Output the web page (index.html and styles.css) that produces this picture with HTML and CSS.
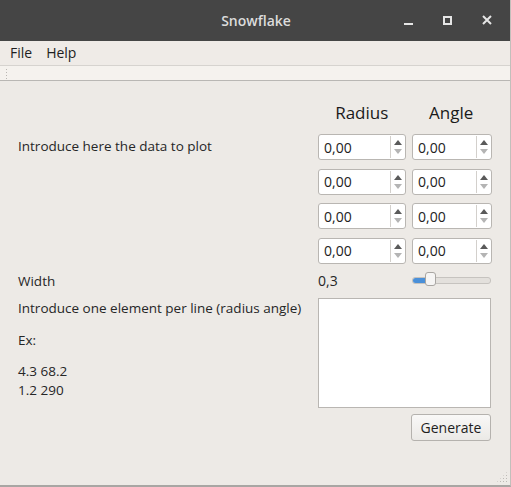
FILE: index.html
```html
<!DOCTYPE html>
<html lang="en">
<head>
    <meta charset="UTF-8">
    <title>Snowflake</title>
    <link rel="stylesheet" href="styles.css">
</head>
<body>
    <div class="window">
        <div class="titlebar">
            <span class="title">Snowflake</span>
            <div class="controls">
                <span class="ctl ctl-min"></span>
                <span class="ctl ctl-max"></span>
                <svg class="ctl-close" width="10" height="10" viewBox="0 0 10 10">
                    <path d="M1 1 L9 9 M9 1 L1 9" stroke="#e6e6e6" stroke-width="2"/>
                </svg>
            </div>
        </div>

        <div class="menubar">
            <span class="menu">File</span>
            <span class="menu">Help</span>
        </div>
        <div class="toolbar"><span class="grip"></span></div>

        <div class="content">
            <div class="row header-row">
                <div class="label"></div>
                <div class="col-head radius-head">Radius</div>
                <div class="col-head angle-head">Angle</div>
            </div>

            <div class="data">
                <div class="label data-label">Introduce here the data to plot</div>
                <div class="spins">
                    <div class="spin wide"><span>0,00</span><div class="arrows"><i class="up"></i><i class="down"></i></div></div>
                    <div class="spin"><span>0,00</span><div class="arrows"><i class="up"></i><i class="down"></i></div></div>
                    <div class="spin wide"><span>0,00</span><div class="arrows"><i class="up"></i><i class="down"></i></div></div>
                    <div class="spin"><span>0,00</span><div class="arrows"><i class="up"></i><i class="down"></i></div></div>
                    <div class="spin wide"><span>0,00</span><div class="arrows"><i class="up"></i><i class="down"></i></div></div>
                    <div class="spin"><span>0,00</span><div class="arrows"><i class="up"></i><i class="down"></i></div></div>
                    <div class="spin wide"><span>0,00</span><div class="arrows"><i class="up"></i><i class="down"></i></div></div>
                    <div class="spin"><span>0,00</span><div class="arrows"><i class="up"></i><i class="down"></i></div></div>
                </div>
            </div>

            <div class="row width-row">
                <div class="label">Width</div>
                <div class="value">0,3</div>
                <div class="slider">
                    <div class="fill"></div>
                    <div class="handle"></div>
                </div>
            </div>

            <div class="row text-row">
                <div class="label help">
                    <p>Introduce one element per line (radius angle)</p>
                    <p class="ex">Ex:</p>
                    <p class="sample">4.3 68.2<br>1.2 290</p>
                </div>
                <div class="textbox"></div>
            </div>

            <div class="actions">
                <button class="generate">Generate</button>
            </div>
        </div>
        <div class="sizegrip"></div>
    </div>
</body>
</html>
```
FILE: styles.css
```css
html, body {
    margin: 0;
    padding: 0;
}
body {
    width: 511px;
    height: 487px;
    overflow: hidden;
    background-color: #c9c6c2;
    font-family: "Open Sans", "Noto Sans", sans-serif;
    font-size: 13.5px;
    color: #262626;
}
.window {
    width: 510px;
    height: 485px;
    background-color: #edeae6;
    border-right: 1px solid #c2bfbb;
    border-bottom: 2px solid #a8a6a3;
    position: relative;
}
.titlebar {
    height: 41px;
    background-color: #454545;
    display: flex;
    align-items: center;
    justify-content: center;
    position: relative;
}
.title {
    color: #dcdcdc;
    font-weight: 600;
    font-size: 14px;
    margin-left: 2px;
}
.controls {
    position: absolute;
    right: 18px;
    top: 15px;
    display: flex;
    align-items: center;
    gap: 30px;
}
.ctl-min {
    width: 9px;
    height: 2px;
    background-color: #e6e6e6;
    margin-top: 7px;
}
.ctl-max {
    width: 5px;
    height: 5px;
    border: 2px solid #e6e6e6;
}
.menubar {
    height: 23px;
    display: flex;
    align-items: center;
    padding-left: 10px;
    padding-bottom: 1px;
    gap: 14px;
    font-size: 14px;
    color: #1e1e1e;
    background-color: #efebe7;
}
.toolbar {
    height: 14px;
    border-top: 1px solid #d6d3cf;
    border-bottom: 1px solid #b9b7b4;
    background-color: #f5f2ee;
    position: relative;
}
.grip {
    position: absolute;
    left: 5px;
    top: 2px;
    width: 3px;
    height: 11px;
    background-image: radial-gradient(circle, #b9b6b2 0.8px, transparent 1px);
    background-size: 3px 3px;
}
.content {
    padding: 17px 19px 0 18px;
}
.row {
    display: flex;
    align-items: center;
}
.label {
    width: 300px;
    flex-shrink: 0;
}
.header-row {
    height: 30px;
    margin-bottom: 6px;
}
.col-head {
    font-size: 17px;
    color: #1a1a1a;
    text-align: center;
    margin-top: -2px;
}
.radius-head {
    width: 88px;
}
.angle-head {
    width: 80px;
    margin-left: 6px;
}
.data {
    display: flex;
}
.data-label {
    padding-top: 3px;
}
.spins {
    display: grid;
    grid-template-columns: 88px 80px;
    column-gap: 6px;
    row-gap: 8.67px;
}
.spin {
    height: 26px;
    box-sizing: border-box;
    border: 1px solid #b9b6b2;
    border-radius: 3px;
    background-color: #ffffff;
    display: flex;
    align-items: center;
    justify-content: space-between;
    padding-left: 5px;
    font-size: 14px;
    color: #222;
}
.arrows {
    width: 14px;
    height: 22px;
    border-left: 1px solid #d3d0cc;
    display: flex;
    flex-direction: column;
    align-items: center;
    justify-content: center;
    gap: 4px;
}
.arrows i {
    width: 0;
    height: 0;
    border-left: 4px solid transparent;
    border-right: 4px solid transparent;
}
.arrows .up {
    border-bottom: 5px solid #5a5a5a;
}
.arrows .down {
    border-top: 5px solid #b4b4b4;
}
.width-row {
    height: 22px;
    margin-top: 6px;
}
.value {
    width: 95px;
    font-size: 14px;
}
.slider {
    position: relative;
    width: 78px;
    height: 5px;
    border: 1px solid #c6c3bf;
    border-radius: 3px;
    background-color: #e3e0dc;
}
.fill {
    width: 14px;
    height: 5px;
    border-radius: 3px 0 0 3px;
    background-color: #4a90d9;
}
.handle {
    position: absolute;
    left: 12px;
    top: -6px;
    width: 11px;
    height: 14px;
    box-sizing: border-box;
    border: 1px solid #a9a6a2;
    border-radius: 3px;
    background-color: #f6f5f4;
}
.text-row {
    align-items: flex-start;
    margin-top: 6px;
}
.help p {
    margin: 0;
}
.help p:first-child {
    margin-top: 1px;
}
.ex {
    margin-top: 14px !important;
}
.sample {
    margin-top: 13px !important;
    line-height: 19px;
}
.textbox {
    width: 173px;
    height: 110px;
    box-sizing: border-box;
    border: 1px solid #b9b6b2;
    background-color: #ffffff;
}
.actions {
    display: flex;
    justify-content: flex-end;
    margin-top: 6px;
}
.generate {
    width: 80px;
    height: 27px;
    font-family: inherit;
    font-size: 14px;
    color: #1e1e1e;
    border: 1px solid #b5b2ae;
    border-radius: 3px;
    background: linear-gradient(#f9f8f7, #ebe9e6);
    padding: 0;
}
.sizegrip {
    position: absolute;
    right: 2px;
    bottom: 2px;
    width: 12px;
    height: 12px;
    background-image: radial-gradient(circle, #bdbab6 0.8px, transparent 1px);
    background-size: 3px 3px;
    clip-path: polygon(100% 0, 100% 100%, 0 100%);
}
```
